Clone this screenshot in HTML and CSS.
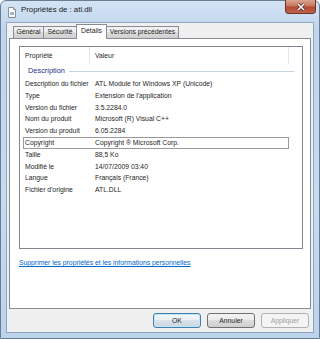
FILE: index.html
```html
<!DOCTYPE html>
<html lang="fr">
<head>
    <meta charset="UTF-8" />
    <title>Propriétés de : atl.dll</title>
    <link rel="stylesheet" href="styles.css">
</head>
<body>
    <div class="window">
        <div class="titlebar">
            <svg class="app-icon" width="10" height="11" viewBox="0 0 10 11">
                <path d="M1.5 0.5 H6.5 L8.5 2.5 V10.5 H1.5 Z" fill="#fbfbfb" stroke="#8a8f96" />
                <path d="M6.5 0.5 V2.5 H8.5" fill="#e4e6e9" stroke="#8a8f96" />
                <rect x="3" y="5" width="4" height="3" fill="#9fb7d3" />
            </svg>
            <span class="title">Propriétés de : atl.dll</span>
            <div class="close">
                <svg width="10" height="8" viewBox="0 0 10 8">
                    <path d="M2 1 L8 7 M8 1 L2 7" stroke="#5a2418" stroke-width="3" />
                    <path d="M2 1 L8 7 M8 1 L2 7" stroke="#ffffff" stroke-width="1.6" />
                </svg>
            </div>
        </div>

        <div class="client">
            <div class="tabs">
                <div class="tab tab-general">Général</div>
                <div class="tab tab-security">Sécurité</div>
                <div class="tab tab-details active">Détails</div>
                <div class="tab tab-versions">Versions précédentes</div>
            </div>

            <div class="panel">
                <div class="listview">
                    <div class="lv-header">
                        <div class="col col-name">Propriété</div>
                        <div class="col col-value">Valeur</div>
                        <div class="col col-rest"></div>
                    </div>

                    <div class="group"><span>Description</span><span class="group-line"></span></div>

                    <div class="row"><span class="name">Description du fichier</span><span class="value">ATL Module for Windows XP (Unicode)</span></div>
                    <div class="row"><span class="name">Type</span><span class="value">Extension de l'application</span></div>
                    <div class="row"><span class="name">Version du fichier</span><span class="value">3.5.2284.0</span></div>
                    <div class="row"><span class="name">Nom du produit</span><span class="value">Microsoft (R) Visual C++</span></div>
                    <div class="row"><span class="name">Version du produit</span><span class="value">6.05.2284</span></div>
                    <div class="row focused"><span class="name">Copyright</span><span class="value">Copyright ® Microsoft Corp.</span></div>
                    <div class="row"><span class="name">Taille</span><span class="value">88,5 Ko</span></div>
                    <div class="row"><span class="name">Modifié le</span><span class="value">14/07/2009 03:40</span></div>
                    <div class="row"><span class="name">Langue</span><span class="value">Français (France)</span></div>
                    <div class="row"><span class="name">Fichier d'origine</span><span class="value">ATL.DLL</span></div>
                </div>

                <a href="#" class="link">Supprimer les propriétés et les informations personnelles</a>
            </div>

            <div class="buttons">
                <button class="btn btn-default">OK</button>
                <button class="btn">Annuler</button>
                <button class="btn" disabled>Appliquer</button>
            </div>
        </div>
    </div>
</body>
</html>
```

FILE: styles.css
```css
* {
    box-sizing: border-box;
}

body {
    margin: 0;
    padding: 0;
    font-family: "Liberation Sans", Arial, sans-serif;
    font-size: 6.8px;
    color: #1e1e1e;
    background: #ffffff;
}

.window {
    width: 320px;
    height: 339px;
    border: 1px solid #6b7d93;
    border-radius: 6px 6px 0 0;
    background: linear-gradient(#d3e3f4, #bfd5ed 30px, #c6dbf0 200px, #bcd3ec);
    padding: 0 5px 5px;
    display: flex;
    flex-direction: column;
}

.titlebar {
    height: 21px;
    display: flex;
    align-items: flex-start;
    flex-shrink: 0;
}

.app-icon {
    margin: 6px 0 0 1px;
}

.title {
    margin: 4px 0 0 4px;
    font-size: 7.8px;
    color: #1b1b1b;
}

.close {
    margin: -1px -2px 0 auto;
    width: 31px;
    height: 14px;
    border: 1px solid #6d3426;
    border-top: none;
    border-radius: 0 0 4px 4px;
    background: linear-gradient(#dba592, #c9765d 45%, #b24a30 55%, #c0624b);
    display: flex;
    align-items: center;
    justify-content: center;
}

.client {
    flex: 1;
    border: 1px solid #8fa5c0;
    background: #f0f0f0;
    padding: 1px 3px 0 2px;
}

.tabs {
    display: flex;
    align-items: flex-end;
    height: 14px;
    padding-left: 4px;
}

.tab {
    height: 12px;
    border: 1px solid #898c95;
    border-bottom: none;
    margin-right: -1px;
    background: linear-gradient(#f3f3f3, #ebebeb 50%, #dddddd 50%, #cfcfcf);
    text-align: center;
    line-height: 10px;
    color: #1e1e1e;
}

.tab-general { width: 31px; }
.tab-security { width: 34px; }
.tab-details { width: 31px; }
.tab-versions { width: 73px; }

.tab.active {
    height: 15px;
    margin-bottom: -1px;
    background: #ffffff;
    position: relative;
    z-index: 1;
    line-height: 12px;
}

.panel {
    width: 302px;
    height: 271px;
    border: 1px solid #898c95;
    background: #ffffff;
    padding: 7px 7px 0 9px;
}

.listview {
    width: 284px;
    height: 203px;
    border: 1px solid #828790;
    background: #ffffff;
}

.lv-header {
    display: flex;
    height: 17px;
}

.col {
    height: 17px;
    line-height: 17px;
    padding-left: 5px;
    color: #2a2a2a;
    border-right: 1px solid #e3e7ed;
}

.col-name { width: 70px; }
.col-value { width: 199px; }
.col-rest { flex: 1; border-right: none; }

.group {
    display: flex;
    align-items: center;
    height: 13px;
    padding-left: 8px;
    margin-bottom: 1px;
    color: #1e3287;
    font-size: 7.4px;
}

.group-line {
    flex: 1;
    height: 1px;
    margin: 1px 8px 0 4px;
    background: #c6d3e6;
}

.row {
    display: flex;
    height: 11.8px;
    line-height: 11.8px;
    margin-left: 3px;
    width: 266px;
}

.row.focused {
    outline: 1px solid #9a9a9a;
    outline-offset: -1px;
}

.name {
    width: 67px;
    padding-left: 2px;
    white-space: nowrap;
}

.value {
    padding-left: 5px;
    white-space: nowrap;
}

.link {
    display: block;
    margin-top: 10px;
    color: #0066cc;
    text-decoration: underline;
    line-height: 8px;
}

.buttons {
    display: flex;
    justify-content: flex-end;
    gap: 6px;
    margin-top: 4px;
    padding-right: 1px;
}

.btn {
    width: 48px;
    height: 15px;
    padding: 0;
    border: 1px solid #707070;
    border-radius: 3px;
    background: linear-gradient(#f2f2f2, #ebebeb 50%, #dddddd 50%, #cfcfcf);
    font-family: inherit;
    font-size: 6.8px;
    color: #1e1e1e;
}

.btn-default {
    border-color: #3c7fb1;
    box-shadow: inset 0 0 0 1px #c4e5f6;
    background: linear-gradient(#f4f8fb, #e9eff4 50%, #d9e2ea 50%, #cbd6df);
}

.btn:disabled {
    border-color: #adb2b5;
    background: #f4f4f4;
    color: #a0a0a0;
}
```
